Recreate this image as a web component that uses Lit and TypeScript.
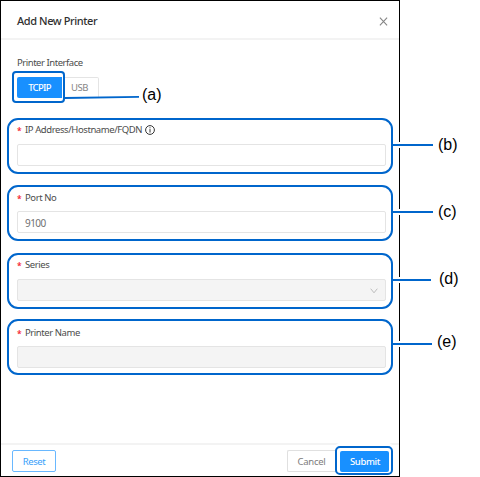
import { LitElement, html, css, svg, nothing } from "lit";
import { customElement } from "lit/decorators.js";
import { styleMap } from "lit/directives/style-map.js";

interface Field {
  label: string;
  value: string;
  info?: boolean;
  disabled?: boolean;
  select?: boolean;
  gap: number;
  labelTop: number;
  inputTop: number;
}

const FIELDS: Field[] = [
  { label: "IP Address/Hostname/FQDN", value: "", info: true, gap: 15, labelTop: 2, inputTop: 6 },
  { label: "Port No", value: "9100", gap: 11, labelTop: 3, inputTop: 5 },
  { label: "Series", value: "", disabled: true, select: true, gap: 12, labelTop: 2, inputTop: 6 },
  { label: "Printer Name", value: "", disabled: true, gap: 10, labelTop: 4, inputTop: 5 },
];

const CALLOUTS = [
  { text: "(b)", x: 438, y: 150, line: 145, end: 433 },
  { text: "(c)", x: 438, y: 217, line: 212, end: 433 },
  { text: "(d)", x: 439, y: 284, line: 280, end: 431 },
  { text: "(e)", x: 437, y: 347, line: 344, end: 432 },
];

@customElement("app-root")
export class AppRoot extends LitElement {
  static styles = css`
    :host {
      display: block;
      position: relative;
      width: 480px;
      height: 477px;
      overflow: hidden;
      background: #fff;
      font-family: "Noto Sans", "Open Sans", sans-serif;
      font-size: 9.5px;
      color: #4c4c4c;
    }
    * { box-sizing: border-box; }
    .dialog {
      display: flex;
      flex-direction: column;
      width: 400px;
      height: 477px;
      border: 1px solid #000;
    }
    .header {
      display: flex;
      justify-content: space-between;
      align-items: center;
      height: 39px;
      padding: 0 11px 0 16px;
      border-bottom: 2px solid #f3f3f3;
    }
    .title {
      font-size: 11px;
      font-weight: 500;
      color: #303030;
      white-space: nowrap;
      letter-spacing: -0.42px;
      padding-top: 2px;
    }
    .close { display: block; margin-top: 3px; }
    .body { flex: 1; padding: 15px 6px 0; }
    .caption {
      height: 16px;
      line-height: 16px;
      padding-left: 10px;
      letter-spacing: -0.46px;
    }
    .group { display: flex; height: 32px; padding-left: 5px; }
    .ring {
      border: 2px solid #0066cc;
      border-radius: 4px;
      background: #fff;
    }
    .tabring { width: 53px; height: 32px; padding: 4px 1px 3px 3px; }
    .tab {
      display: flex;
      align-items: center;
      justify-content: center;
      height: 21px;
      width: 45px;
      background: #1890ff;
      color: #fff;
      border-radius: 2px 0 0 2px;
      font-weight: 500;
      letter-spacing: -0.7px;
    }
    .usb {
      display: flex;
      align-items: center;
      justify-content: center;
      width: 34px;
      height: 21px;
      margin-top: 6px;
      padding-right: 4px;
      border: 1px solid #e4e4e4;
      border-left: 0;
      border-radius: 0 2px 2px 0;
      color: #858585;
      letter-spacing: -0.5px;
    }
    .field {
      height: 56px;
      width: 386px;
      padding: 0 5px 0 8px;
      border: 2px solid #0066cc;
      border-radius: 11px;
    }
    .label {
      display: flex;
      align-items: center;
      height: 16px;
      line-height: 16px;
      white-space: nowrap;
    }
    .star { width: 8px; color: #f5222d; font-size: 8.5px; font-weight: 600; padding-top: 1px; }
    .name { letter-spacing: -0.42px; }
    .info { margin-left: 3px; margin-top: -1px; }
    .input {
      display: flex;
      align-items: center;
      justify-content: space-between;
      height: 22px;
      width: 369px;
      padding: 1px 7px 0;
      border: 1px solid #e4e4e4;
      border-radius: 2px;
      color: #707070;
      font-size: 10px;
      letter-spacing: -0.55px;
    }
    .off { background: #f4f4f4; }
    .footer {
      display: flex;
      height: 33px;
      border-top: 2px solid #f3f3f3;
      padding-left: 11px;
    }
    .button {
      display: flex;
      align-items: center;
      justify-content: center;
      height: 22px;
      margin-top: 5px;
      border: 1px solid #e0e0e0;
      border-radius: 2px;
      letter-spacing: -0.3px;
      color: #7c7c7c;
    }
    .reset { width: 44px; border-color: #69b8ff; color: #3a9ffa; letter-spacing: -0.4px; }
    .cancel { width: 50px; margin-left: auto; border-right: 0; border-radius: 2px 0 0 2px; padding-right: 2px; }
    .submitring {
      width: 58px;
      height: 29px;
      margin: 1px 6px 0 -2px;
      padding: 3px;
      border-radius: 5px;
      box-shadow: 0 -3px 0 #fff;
    }
    .submit {
      display: flex;
      align-items: center;
      justify-content: center;
      width: 49px;
      height: 21px;
      padding-left: 1px;
      border-radius: 2px;
      background: #1890ff;
      color: #fff;
      font-weight: 500;
      letter-spacing: -0.35px;
    }
    .callouts {
      position: absolute;
      inset: 0;
      pointer-events: none;
      font-family: "Liberation Sans", Arial, sans-serif;
      font-size: 16px;
    }
  `;

  private field(f: Field) {
    return html`
      <div class="field" style=${styleMap({ marginTop: `${f.gap}px` })}>
        <div class="label" style=${styleMap({ marginTop: `${f.labelTop}px` })}>
          <span class="star">*</span><span class="name">${f.label}</span>
          ${f.info
            ? html`<svg class="info" width="10" height="10" viewBox="0 0 10 10" fill="none" stroke="#333">
                <circle cx="5" cy="5" r="4.4"></circle>
                <path d="M5 2.3V3.3M5 4.1V7.6"></path>
              </svg>`
            : nothing}
        </div>
        <div class="input ${f.disabled ? "off" : ""}" style=${styleMap({ marginTop: `${f.inputTop}px` })}>
          <span>${f.value}</span>
          ${f.select
            ? html`<svg width="8" height="6" viewBox="0 0 8 6" fill="none" stroke="#bcbcbc">
                <path d="M.7 .7L4 4.8L7.3 .7"></path>
              </svg>`
            : nothing}
        </div>
      </div>
    `;
  }

  render() {
    return html`
      <div class="dialog">
        <div class="header">
          <span class="title">Add New Printer</span>
          <svg class="close" width="9" height="9" viewBox="0 0 9 9" fill="none" stroke="#858585" stroke-width="1.1">
            <path d="M.9 .7L8.1 8.3M8.1 .7L.9 8.3"></path>
          </svg>
        </div>
        <div class="body">
          <div class="caption">Printer Interface</div>
          <div class="group">
            <div class="ring tabring"><div class="tab">TCPIP</div></div>
            <div class="usb">USB</div>
          </div>
          ${FIELDS.map((f) => this.field(f))}
        </div>
        <div class="footer">
          <div class="button reset">Reset</div>
          <div class="button cancel">Cancel</div>
          <div class="ring submitring"><div class="submit">Submit</div></div>
        </div>
      </div>
      <svg class="callouts" width="480" height="477">
        <path d="M65 98L139 96.8" stroke="#0066cc" stroke-width="1.8"></path>
        <text x="142" y="100">(a)</text>
        ${CALLOUTS.map(
          (c) => svg`
            <rect x="398" y=${c.line - 3} width="3" height="6" fill="#fff"></rect>
            <path d="M393 ${c.line}H${c.end}" stroke="#0066cc" stroke-width="2"></path>
            <text x=${c.x} y=${c.y}>${c.text}</text>`,
        )}
      </svg>
    `;
  }
}
